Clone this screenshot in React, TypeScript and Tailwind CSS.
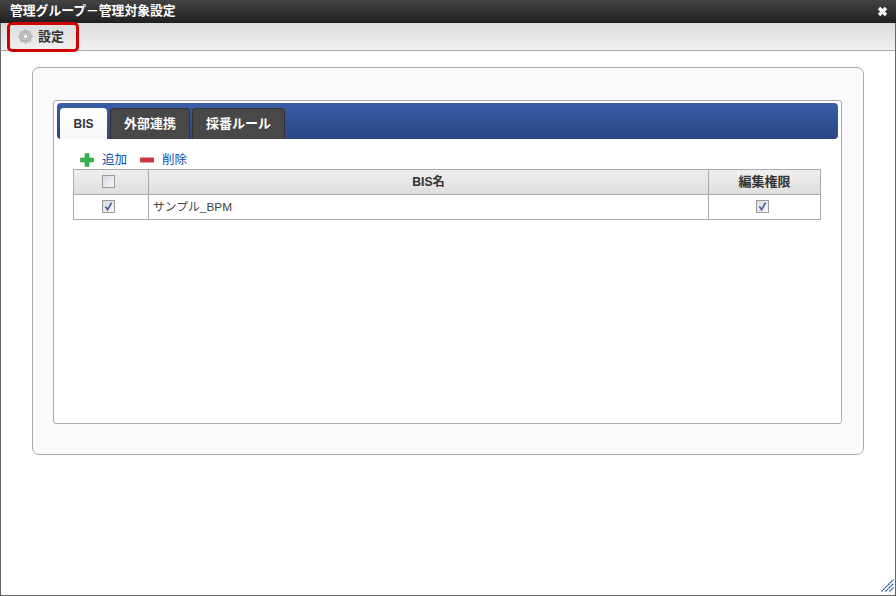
const font = { fontFamily: '"Liberation Sans", "Noto Sans CJK JP", sans-serif' };

function Gear() {
  const teeth = [0, 45, 90, 135, 180, 225, 270, 315];
  return (
    <svg width="15" height="15" viewBox="0 0 15 15">
      {teeth.map((a) => (
        <circle key={a} cx="7.5" cy="2.5" r="1.8" fill="#c4c4c4" stroke="#9a9a9a" strokeWidth="0.5" transform={`rotate(${a} 7.5 7.5)`} />
      ))}
      <circle cx="7.5" cy="7.5" r="4.4" fill="#cfcfcf" stroke="#a0a0a0" strokeWidth="0.7" />
      <circle cx="7.5" cy="7.5" r="2.3" fill="#f2f2f2" stroke="#989898" strokeWidth="0.7" />
    </svg>
  );
}

function Check({ checked }: { checked?: boolean }) {
  return (
    <span className="flex h-[13px] w-[13px] items-center justify-center border border-[#9a9a9a] bg-gradient-to-br from-[#d8dbe2] to-[#f6f6f8]">
      {checked && (
        <svg width="11" height="11" viewBox="0 0 11 11">
          <path d="M2.5 5.5 L4.6 8.6 L8.6 1.6" fill="none" stroke="#4a5ca8" strokeWidth="1.7" />
        </svg>
      )}
    </span>
  );
}

function Tab({ label, active, width }: { label: string; active?: boolean; width: string }) {
  return (
    <div
      className={
        active
          ? `${width} flex h-[31px] items-center justify-center rounded-t-[4px] bg-gradient-to-b from-white to-[#f7f7f7] text-[12px] font-bold text-[#333]`
          : `${width} flex h-[31px] items-center justify-center rounded-t-[4px] border border-b-0 border-[#333] bg-[#484848] text-[13px] font-bold text-white`
      }
    >
      {label}
    </div>
  );
}

export default function App() {
  return (
    <div className="relative flex h-[596px] w-[896px] flex-col border-x border-b border-[#666] bg-white" style={font}>
      <div className="-mx-px flex h-[23px] items-center justify-between bg-gradient-to-b from-[#444] to-[#202020] pl-[10px] pr-[8px]">
        <span className="pb-[2px] text-[12.8px] font-bold text-white">管理グループ－管理対象設定</span>
        <svg width="11" height="11" viewBox="0 0 11 11">
          <path d="M2 2 L9 9 M9 2 L2 9" stroke="#fff" strokeWidth="3.4" />
        </svg>
      </div>

      <div className="flex h-[28px] items-center gap-[5px] border-b border-[#aaa] bg-gradient-to-b from-[#dcdcdc] to-[#f0f0f0] pl-[17px]">
        <Gear />
        <span className="text-[13px] font-bold text-[#333]">設定</span>
      </div>

      {/* red highlight round the toolbar button */}
      <div className="absolute left-[6px] top-[22px] h-[30px] w-[72px] rounded-[5px] border-[3px] border-[#d00000]" />

      <div className="ml-[31px] mt-[16px] h-[388px] w-[832px] rounded-[7px] border border-[#aaa] bg-[#fbfbfe] pl-[20px] pt-[32px]">
        <div className="h-[324px] w-[789px] rounded-[3px] border border-[#aaa] bg-white px-[3px] pt-[2px]">
          <div className="flex h-[36px] items-end rounded-[4px] bg-gradient-to-b from-[#3a5ea8] to-[#2a4684] pl-[3px]">
            <Tab label="BIS" active width="w-[47px]" />
            <div className="w-[3px]" />
            <Tab label="外部連携" width="w-[80px]" />
            <div className="w-[2px]" />
            <Tab label="採番ルール" width="w-[93px]" />
          </div>

          <div className="ml-[23px] mt-[12px] flex h-[18px] items-center text-[12.5px] text-[#0b4fb3]">
            <svg width="14" height="14" viewBox="0 0 14 14">
              <path d="M5 0.5 H9 V5 H13.5 V9 H9 V13.5 H5 V9 H0.5 V5 H5 Z" fill="#36b04a" stroke="#2a8f3a" strokeWidth="0.5" />
            </svg>
            <span className="ml-[8px]">追加</span>
            <svg className="ml-[13px]" width="14" height="6" viewBox="0 0 14 6">
              <rect x="0" y="0.5" width="14" height="5" rx="1" fill="#c23b3b" />
            </svg>
            <span className="ml-[8px]">削除</span>
          </div>

          <table className="ml-[16px] w-[747px] table-fixed border-collapse text-[12px]">
            <colgroup>
              <col className="w-[75px]" />
              <col className="w-[560px]" />
              <col className="w-[112px]" />
            </colgroup>
            <thead>
              <tr className="h-[25px] bg-gradient-to-b from-[#efefef] to-[#dedede]">
                <th className="border border-[#aaa] p-0">
                  <div className="flex justify-center pb-[2px] pr-[6px]">
                    <Check />
                  </div>
                </th>
                <th className="border border-[#aaa] p-0 text-[12.2px] font-bold text-[#333]">BIS名</th>
                <th className="border border-[#aaa] p-0 text-[13px] font-bold text-[#333]">編集権限</th>
              </tr>
            </thead>
            <tbody>
              <tr className="h-[25px]">
                <td className="border border-[#aaa] p-0">
                  <div className="flex justify-center pb-[2px] pr-[6px]">
                    <Check checked />
                  </div>
                </td>
                <td className="border border-[#aaa] pb-0 pl-[4px] pt-[2px] text-[11.8px] text-[#444]">サンプル_BPM</td>
                <td className="border border-[#aaa] p-0">
                  <div className="flex justify-center pb-[2px] pr-[4px]">
                    <Check checked />
                  </div>
                </td>
              </tr>
            </tbody>
          </table>
        </div>
      </div>

      {/* resize grip */}
      <svg className="absolute bottom-[3px] right-[1px]" width="13" height="13" viewBox="0 0 13 13">
        <path d="M0.5 12.5 L12.5 0.5 M4.5 12.5 L12.5 4.5 M8.5 12.5 L12.5 8.5" stroke="#0f4f8f" strokeWidth="1.1" strokeDasharray="1.8 0.5" />
      </svg>
    </div>
  );
}
